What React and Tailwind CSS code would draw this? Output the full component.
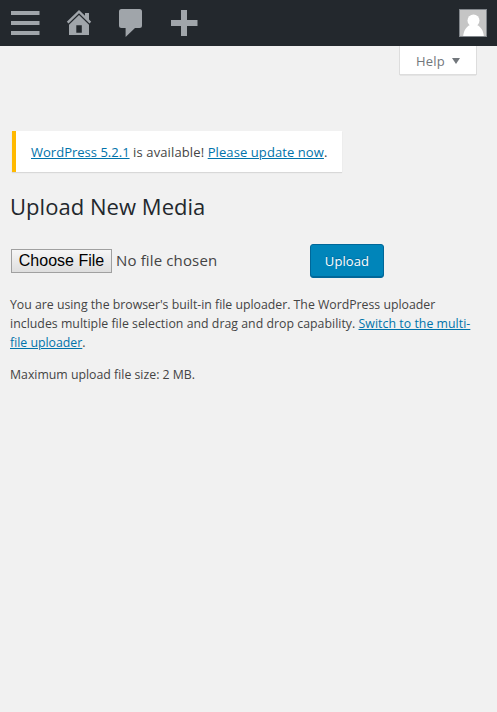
function AdminBar() {
  return (
    <header className="flex h-[46px] items-start bg-[#23282d] text-[#a0a5aa]">
      <svg width="220" height="46" viewBox="0 0 220 46" fill="currentColor" aria-hidden="true">
        <path d="M11 11h28.500v4H11zM11 21h28.500v4H11zM11 31h28.500v4H11z" />
        <path d="M79 10l6 5.800V13H89v6.600l2.200 2.200-1.700 1.800L79 13.300 68.500 23.600l-1.700-1.800z" />
        <path fillRule="evenodd" d="M79 15l10 9.800V35H69V24.800zM76.300 25.300v7.400h5.500v-7.400z" />
        <path d="M121.500 9h18a2.500 2.500 0 0 1 2.500 2.500v14a2.500 2.500 0 0 1-2.500 2.500h-4.500l-9.400 9v-9h-4.100a2.500 2.500 0 0 1-2.500-2.500v-14a2.500 2.500 0 0 1 2.500-2.500z" />
        <path d="M181 10h6v10h10.500v6H187v10h-6V26h-10v-6h10z" />
      </svg>
      <div className="mt-[9px] mr-[10px] ml-auto h-7 w-7 border border-[#82878c] bg-[#c5c5c5]">
        <svg className="block" width="26" height="26" viewBox="0 0 26 26" fill="#fff" aria-hidden="true">
          <circle cx="13.500" cy="10.500" r="6" />
          <path d="M3.200 26c.4-4.500 2.500-9 6.800-11h7c4.300 2 6.400 6.500 6.800 11z" />
        </svg>
      </div>
    </header>
  );
}

export default function App() {
  return (
    <div className="h-[712px] overflow-hidden bg-[#f1f1f1] font-['Open_Sans','Noto_Sans',sans-serif] text-[13px] text-[#444]">
      <AdminBar />
      <div className="flex h-[85px] justify-end pr-5">
        <button className="flex h-[29px] w-[78px] items-center border border-t-0 border-[#ddd] bg-white pt-[3px] pl-4 text-[13px] tracking-[0.2px] text-[#72777c] shadow-[0_1px_1px_-1px_rgba(0,0,0,0.3)]">
          <span>Help</span>
          <svg className="mb-px ml-[7px]" width="8" height="6" viewBox="0 0 8 6" fill="currentColor" aria-hidden="true">
            <path d="M0 0h8L4 6z" />
          </svg>
        </button>
      </div>
      <main className="pl-[10px]">
        <div className="ml-[2px] flex h-[41px] w-[330px] items-center border-l-4 border-[#ffb900] bg-white pt-[2px] pl-[15px] shadow-[0_1px_1px_0_rgba(0,0,0,0.1)]">
          <p className="leading-[21px] tracking-[0.085px] whitespace-nowrap">
            <a className="tracking-[0.01px] text-[#0073aa] underline">WordPress 5.2.1</a>
            <span className="tracking-[0.12px]"> is available! </span>
            <a className="text-[#0073aa] underline">Please update now</a>.
          </p>
        </div>
        <h1 className="mt-[19px] text-[22px] leading-[30px] tracking-[0.04px] text-[#23282d]">Upload New Media</h1>
        <div className="mt-[23px] flex h-[34px] items-center">
          <button className="ml-px h-6 w-[101px] border border-[#a0a0a0] bg-linear-to-b from-[#f6f6f6] to-[#dedede] font-['Liberation_Sans',Arial,sans-serif] text-base leading-[22px] whitespace-nowrap text-black">Choose File</button>
          <span className="mb-[2px] ml-1 w-[194px] text-[15px] tracking-[0.14px]">No file chosen</span>
          <button className="h-[34px] w-[74px] rounded-[3px] border border-[#006799] bg-[#0085ba] pt-px text-[13px] tracking-[0.1px] text-white shadow-[inset_0_-1px_0_#006799] [text-shadow:0_-1px_1px_#006799]">Upload</button>
        </div>
        <div className="mt-[17px] text-[12.300px] leading-[19px] whitespace-nowrap">
          <p className="tracking-[-0.01px]">You are using the browser's built-in file uploader. The WordPress uploader</p>
          <p className="tracking-[0.03px]">includes multiple file selection and drag and drop capability. <a className="tracking-[0.05px] text-[#0073aa] underline">Switch to the multi-</a></p>
          <p><a className="text-[#0073aa] underline">file uploader</a>.</p>
          <p className="mt-[13px]">Maximum upload file size: 2 MB.</p>
        </div>
      </main>
    </div>
  );
}
